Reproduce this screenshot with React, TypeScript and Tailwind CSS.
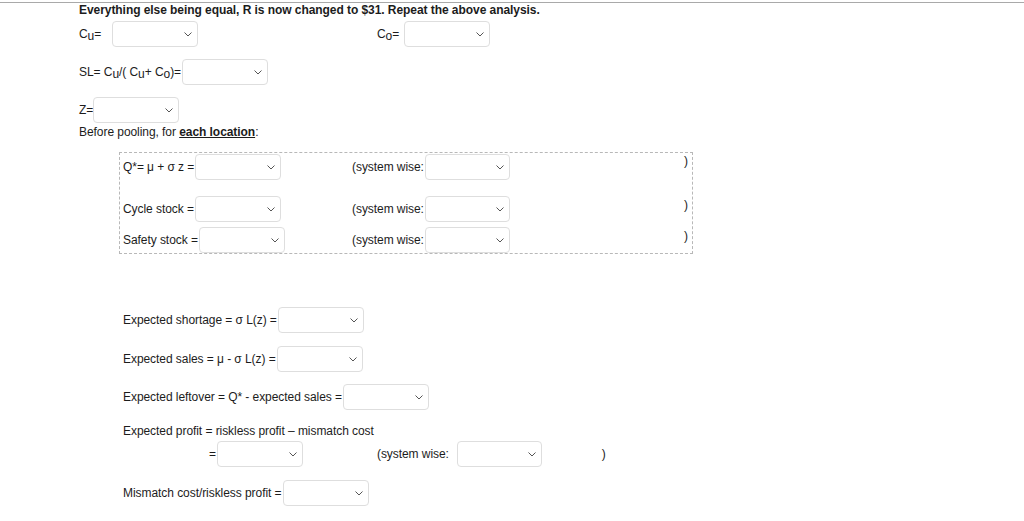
import React from "react";

function Select({ w = 86 }: { w?: number }) {
  return (
    <div
      className="ml-[1px] flex h-[26px] shrink-0 items-center justify-end rounded-[4px] border border-[#dedede] bg-white pr-[5px]"
      style={{ width: w }}
    >
      <svg width="8" height="5" viewBox="0 0 8 5" fill="none">
        <path d="M0.5 0.5L4 4L7.5 0.5" stroke="#555" strokeWidth="1" />
      </svg>
    </div>
  );
}

// subscript letter, slightly lowered
function Sub({ c }: { c: string }) {
  return <span className="relative top-[2px]">{c}</span>;
}

function SystemRow({
  label,
  mt,
  parenTop,
}: {
  label: React.ReactNode;
  mt: string;
  parenTop?: boolean;
}) {
  return (
    <div className={`flex h-[26px] items-center ${mt}`}>
      <div className="flex w-[232px] items-center pl-[3px]">
        <span className="whitespace-nowrap">{label}</span>
        <Select />
      </div>
      <span className="whitespace-nowrap">(system wise:</span>
      <Select w={85} />
      <div className="flex flex-1 justify-end pr-[4px]">
        <span className={parenTop ? "relative -top-[6px]" : "relative -top-[4px]"}>)</span>
      </div>
    </div>
  );
}

export default function App() {
  return (
    <div className="min-h-[521px] w-[1024px] bg-white text-[12px] leading-[14px] tracking-[-0.06px] text-[#1c1c1c] [font-family:'Liberation_Sans',Arial,sans-serif]">
      <div className="h-0 pt-[2px]" />
      <div className="border-t border-[#a9a9a9]" />

      <div className="pl-[79px]">
        <div className="h-[14px] font-bold">
          Everything else being equal, R is now changed to $31. Repeat the above analysis.
        </div>

        <div className="mt-[4px] flex h-[26px] items-center">
          <span className="w-[32px]">
            C<Sub c="u" />=
          </span>
          <Select />
          <span className="ml-[179px] w-[26px]">
            C<Sub c="o" />=
          </span>
          <Select />
        </div>

        <div className="mt-[12px] flex h-[26px] items-center">
          <span className="whitespace-nowrap">
            SL= C<Sub c="u" />/( C<Sub c="u" />+ C<Sub c="o" />)=
          </span>
          <Select />
        </div>

        <div className="mt-[12px] flex h-[26px] items-center">
          <span className="w-[13px]">Z=</span>
          <Select />
        </div>

        <div className="mt-[2px] h-[14px]">
          Before pooling, for <span className="font-bold underline underline-offset-1">each location</span>:
        </div>

        <div className="ml-[40px] mt-[13px] w-[574px] border border-dashed border-[#b8b8b8] pt-[1px]">
          <SystemRow label="Q*= μ + σ z =" mt="mt-0" parenTop />
          <SystemRow label="Cycle stock =" mt="mt-[16px]" />
          <SystemRow label="Safety stock =" mt="mt-[5px]" />
        </div>

        <div className="pl-[44px]">
          <div className="mt-[53px] flex h-[26px] items-center">
            <span className="whitespace-nowrap">Expected shortage = σ L(z) =</span>
            <Select />
          </div>
          <div className="mt-[13px] flex h-[26px] items-center">
            <span className="whitespace-nowrap">Expected sales = μ - σ L(z) =</span>
            <Select />
          </div>
          <div className="mt-[12px] flex h-[26px] items-center">
            <span className="whitespace-nowrap">Expected leftover = Q* - expected sales =</span>
            <Select />
          </div>
          <div className="mt-[14px] h-[14px] whitespace-nowrap">
            Expected profit = riskless profit – mismatch cost
          </div>
          <div className="mt-[3px] flex h-[26px] items-center">
            <span className="ml-[86px]">=</span>
            <Select />
            <span className="ml-[74px] whitespace-nowrap">(system wise:</span>
            <div className="ml-[7px]">
              <Select w={85} />
            </div>
            <span className="ml-[60px]">)</span>
          </div>
          <div className="mt-[13px] flex h-[26px] items-center">
            <span className="whitespace-nowrap">Mismatch cost/riskless profit =</span>
            <Select />
          </div>
        </div>
      </div>
    </div>
  );
}
